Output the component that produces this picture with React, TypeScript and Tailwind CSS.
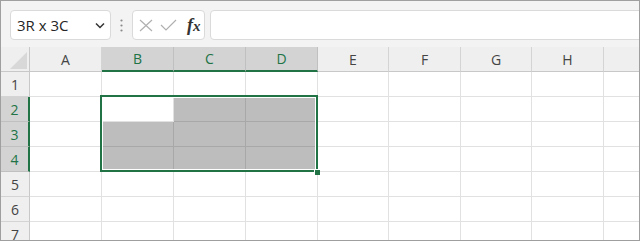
import React from "react";

type Col = { l: string; w: string; s?: boolean };
const cols: Col[] = [
  { l: "A", w: "w-[72px]" },
  { l: "B", w: "w-[72px]", s: true },
  { l: "C", w: "w-[72px]", s: true },
  { l: "D", w: "w-[72px]", s: true },
  { l: "E", w: "w-[71px]" },
  { l: "F", w: "w-[72px]" },
  { l: "G", w: "w-[71px]" },
  { l: "H", w: "w-[72px]" },
  { l: "", w: "w-[60px]" },
];

const rows = [1, 2, 3, 4, 5, 6, 7];

function isGray(r: number, ci: number) {
  if (ci < 1 || ci > 3) return false;
  if (r < 2 || r > 4) return false;
  if (r === 2 && ci === 1) return false;
  return true;
}

export default function App() {
  const font = { fontFamily: '"Open Sans", "Noto Sans", sans-serif' };
  return (
    <div
      className="w-[640px] h-[241px] border border-[#9f9f9f] bg-[#f3f3f3] overflow-hidden flex flex-col"
      style={font}
    >
      {/* toolbar */}
      <div className="h-[46px] shrink-0 flex items-start pt-[9px] pl-[9px]">
        <div className="w-[101px] h-[30px] rounded-[4px] border border-[#dadada] bg-white flex items-center justify-between pl-[6px] pr-[5px]">
          <span className="text-[15px] text-[#262626] leading-none">3R x 3C</span>
          <svg width="10" height="7" viewBox="0 0 10 7">
            <path d="M1 1.5 L5 5.5 L9 1.5" fill="none" stroke="#333" strokeWidth="1.5" />
          </svg>
        </div>
        <div className="w-[21px] h-[30px] flex items-center justify-center">
          <svg width="3" height="13" viewBox="0 0 3 13">
            <circle cx="1.5" cy="1.5" r="1.1" fill="#8a8a8a" />
            <circle cx="1.5" cy="6.5" r="1.1" fill="#8a8a8a" />
            <circle cx="1.5" cy="11.5" r="1.1" fill="#8a8a8a" />
          </svg>
        </div>
        <div className="w-[73px] h-[30px] rounded-[4px] border border-[#dadada] bg-white flex items-center pl-[5px]">
          <svg width="14" height="13" viewBox="0 0 14 13" className="ml-[1px]">
            <path d="M1 1 L13 12 M13 1 L1 12" fill="none" stroke="#b0b0b0" strokeWidth="1.2" />
          </svg>
          <svg width="17" height="12" viewBox="0 0 17 12" className="ml-[7px]">
            <path d="M1 6 L6 11 L16 1" fill="none" stroke="#b0b0b0" strokeWidth="1.2" />
          </svg>
          <span
            className="ml-[10px] text-[18px] font-bold italic text-[#333] leading-none"
            style={{ fontFamily: '"Liberation Serif", serif' }}
          >
            f<span className="text-[15px]">x</span>
          </span>
        </div>
        <div className="flex-1 h-[30px] ml-[5px] -mr-[10px] rounded-[4px] border border-[#dadada] bg-white" />
      </div>

      {/* grid */}
      <div className="relative flex-1">
        {/* header row */}
        <div className="flex h-[25px]">
          <div className="w-[29px] h-[25px] shrink-0 bg-[#efefef] border-r border-b border-[#c8c8c8] flex items-end justify-end pr-[2px] pb-[2px]">
            <svg width="17" height="17" viewBox="0 0 17 17">
              <path d="M17 0 L17 17 L0 17 Z" fill="#d8d8d8" />
            </svg>
          </div>
          {cols.map((c, i) => (
            <div
              key={i}
              className={
                c.w +
                " h-[25px] shrink-0 flex items-center justify-center text-[14px] border-r " +
                (c.s
                  ? "bg-[#d3d3d3] text-[#217346] border-r-[#c0c0c0] border-b-2 border-b-[#217346]"
                  : "bg-[#efefef] text-[#444444] border-r-[#d4d4d4] border-b border-b-[#c8c8c8]")
              }
            >
              {c.l}
            </div>
          ))}
        </div>
        {/* rows */}
        {rows.map((r) => {
          const sel = r >= 2 && r <= 4;
          return (
            <div key={r} className="flex h-[25px]">
              <div
                className={
                  "w-[29px] h-[25px] shrink-0 flex items-center justify-center text-[14px] border-b " +
                  (sel
                    ? "bg-[#d3d3d3] text-[#217346] border-b-[#c0c0c0] border-r-2 border-r-[#217346]"
                    : "bg-[#efefef] text-[#444444] border-b-[#d4d4d4] border-r border-r-[#c8c8c8]")
                }
              >
                {r}
              </div>
              {cols.map((c, ci) => {
                const g = isGray(r, ci);
                return (
                  <div
                    key={ci}
                    className={
                      c.w +
                      " h-[25px] shrink-0 border-r border-b " +
                      (g
                        ? "bg-[#bdbdbd] border-[#a8a8a8]"
                        : "bg-white border-[#e1e1e1]")
                    }
                  />
                );
              })}
            </div>
          );
        })}
        {/* selection overlay */}
        <div className="absolute left-[99px] top-[48px] w-[218px] h-[77px] border-2 border-[#217346] shadow-[inset_0_0_0_1px_#ffffff] pointer-events-none" />
        <div className="absolute left-[313px] top-[122px] w-[6px] h-[6px] bg-[#217346] border-l border-t border-white pointer-events-none" />
      </div>
    </div>
  );
}
